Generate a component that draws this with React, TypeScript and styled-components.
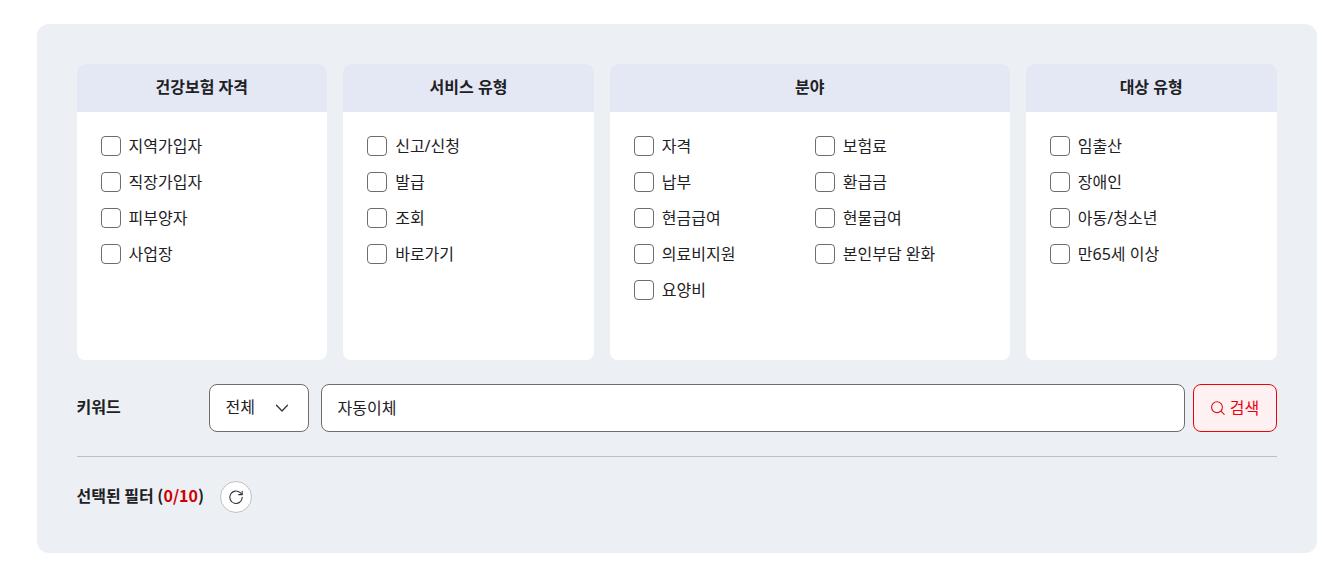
import { useState } from "react";
import styled, { createGlobalStyle } from "styled-components";

const GlobalStyle = createGlobalStyle`
  * { box-sizing: border-box; }
  body {
    margin: 0;
    background: #ffffff;
    color: #1e2124;
    font-family: "Noto Sans", "Noto Sans CJK KR", sans-serif;
    font-size: 16px;
    line-height: 24px;
  }
  button, input, select { font: inherit; color: inherit; }
`;

const Page = styled.main`
  padding: 24px 0 16px 18px;
`;

const Panel = styled.form`
  max-width: 1280px;
  margin: 0 auto;
  padding: 40px;
  border-radius: 12px;
  background: #ecf0f5;
`;

const Groups = styled.div`
  display: grid;
  grid-template-columns: 1fr 1fr calc(100% / 3) 1fr;
  gap: 16px;
`;

const Group = styled.section`
  display: flex;
  flex-direction: column;
  overflow: hidden;
  border-radius: 8px;
  background: #ffffff;
`;

const GroupTitle = styled.h2`
  margin: 0;
  padding: 11px 16px 13px;
  background: #e4e8f5;
  font-size: 16px;
  line-height: 24px;
  font-weight: 700;
  text-align: center;
`;

const Options = styled.ul<{ $columns: number }>`
  display: grid;
  grid-template-columns: repeat(${(p) => p.$columns}, 1fr);
  align-content: start;
  gap: 16px 10px;
  min-height: 248px;
  margin: 0;
  padding: 24px;
  list-style: none;
`;

const Option = styled.label`
  display: flex;
  align-items: center;
  gap: 8px;
  line-height: 20px;
  white-space: nowrap;
  cursor: pointer;
`;

const Checkbox = styled.input`
  appearance: none;
  flex: none;
  width: 20px;
  height: 20px;
  margin: 0;
  border: 1px solid #6d6d6d;
  border-radius: 4px;
  background: #ffffff;
  &:checked {
    border-color: #e60000;
    background: #e60000;
    box-shadow: inset 0 0 0 4px #ffffff;
  }
`;

const KeywordRow = styled.div`
  display: flex;
  align-items: center;
  margin-top: 24px;
  padding-bottom: 24px;
  border-bottom: 1px solid #c0c0c0;
`;

const KeywordLabel = styled.label`
  flex: none;
  width: 132px;
  padding-bottom: 2px;
  font-weight: 700;
`;

const SelectBox = styled.div`
  display: grid;
  flex: none;
  width: 100px;
  margin-right: 12px;
  > * { grid-area: 1 / 1; }
  > svg {
    align-self: center;
    justify-self: end;
    margin-right: 20px;
    pointer-events: none;
  }
`;

const Select = styled.select`
  appearance: none;
  width: 100%;
  height: 48px;
  padding: 0 36px 2px 16px;
  border: 1px solid #6d6d6d;
  border-radius: 8px;
  background: #ffffff;
`;

const KeywordInput = styled.input`
  flex: 1;
  min-width: 0;
  height: 48px;
  margin-right: 8px;
  padding: 0 16px 2px;
  border: 1px solid #6d6d6d;
  border-radius: 8px;
  background: #ffffff;
`;

const SearchButton = styled.button`
  display: flex;
  flex: none;
  align-items: center;
  justify-content: center;
  gap: 4px;
  width: 84px;
  height: 48px;
  padding: 0;
  border: 1px solid #f00008;
  border-radius: 8px;
  background: #fff0f1;
  color: #ee0010;
  cursor: pointer;
`;

const FilterRow = styled.div`
  display: flex;
  align-items: center;
  gap: 16px;
  margin-top: 24px;
`;

const FilterTitle = styled.strong`
  padding-bottom: 4px;
  font-family: "Noto Sans CJK KR", sans-serif;
  font-weight: 700;
`;

const Count = styled.span`
  color: #d00000;
`;

const ResetButton = styled.button`
  display: flex;
  align-items: center;
  justify-content: center;
  width: 32px;
  height: 32px;
  padding: 0;
  border: 1px solid #c0c0c0;
  border-radius: 50%;
  background: #ffffff;
  cursor: pointer;
`;

const groups = [
  { title: "건강보험 자격", columns: 1, options: ["지역가입자", "직장가입자", "피부양자", "사업장"] },
  { title: "서비스 유형", columns: 1, options: ["신고/신청", "발급", "조회", "바로가기"] },
  {
    title: "분야",
    columns: 2,
    options: ["자격", "보험료", "납부", "환급금", "현금급여", "현물급여", "의료비지원", "본인부담 완화", "요양비"],
  },
  { title: "대상 유형", columns: 1, options: ["임출산", "장애인", "아동/청소년", "만65세 이상"] },
];

const MAX_FILTERS = 10;

export default function App() {
  const [selected, setSelected] = useState<string[]>([]);

  const toggle = (key: string) =>
    setSelected((current) => {
      if (current.includes(key)) return current.filter((item) => item !== key);
      return current.length < MAX_FILTERS ? [...current, key] : current;
    });

  return (
    <>
      <GlobalStyle />
      <Page>
        <Panel onSubmit={(event) => event.preventDefault()}>
          <Groups>
            {groups.map((group) => (
              <Group key={group.title}>
                <GroupTitle>{group.title}</GroupTitle>
                <Options $columns={group.columns}>
                  {group.options.map((option) => {
                    const key = `${group.title}:${option}`;
                    return (
                      <li key={key}>
                        <Option>
                          <Checkbox type="checkbox" checked={selected.includes(key)} onChange={() => toggle(key)} />
                          {option}
                        </Option>
                      </li>
                    );
                  })}
                </Options>
              </Group>
            ))}
          </Groups>

          <KeywordRow>
            <KeywordLabel htmlFor="keyword">키워드</KeywordLabel>
            <SelectBox>
              <Select aria-label="검색 범위" defaultValue="all">
                <option value="all">전체</option>
              </Select>
              <svg width="14" height="14" viewBox="0 0 14 14" fill="none" stroke="#33363d" strokeWidth="1.3" strokeLinecap="round" strokeLinejoin="round" aria-hidden="true">
                <path d="M1.500 4.200 7 10l5.500-5.800" />
              </svg>
            </SelectBox>
            <KeywordInput id="keyword" type="text" defaultValue="자동이체" />
            <SearchButton type="submit">
              <svg width="16" height="16" viewBox="0 0 16 16" fill="none" stroke="#d8101c" strokeWidth="1.1" strokeLinecap="round" aria-hidden="true">
                <circle cx="7" cy="7.200" r="5.400" />
                <path d="m11 11.200 3.200 3.200" />
              </svg>
              검색
            </SearchButton>
          </KeywordRow>

          <FilterRow>
            <FilterTitle>
              선택된 필터 (<Count>{selected.length}/{MAX_FILTERS}</Count>)
            </FilterTitle>
            <ResetButton type="button" aria-label="초기화" onClick={() => setSelected([])}>
              <svg width="16" height="16" viewBox="0 0 16 16" fill="none" stroke="#33363d" strokeWidth="1.1" strokeLinecap="round" strokeLinejoin="round" aria-hidden="true">
                <path d="M14.200 8.400A6.200 6.200 0 1 1 12.200 3.700L14 5.400" />
                <path d="M14.200 2.200V5.600H10.600" />
              </svg>
            </ResetButton>
          </FilterRow>
        </Panel>
      </Page>
    </>
  );
}
